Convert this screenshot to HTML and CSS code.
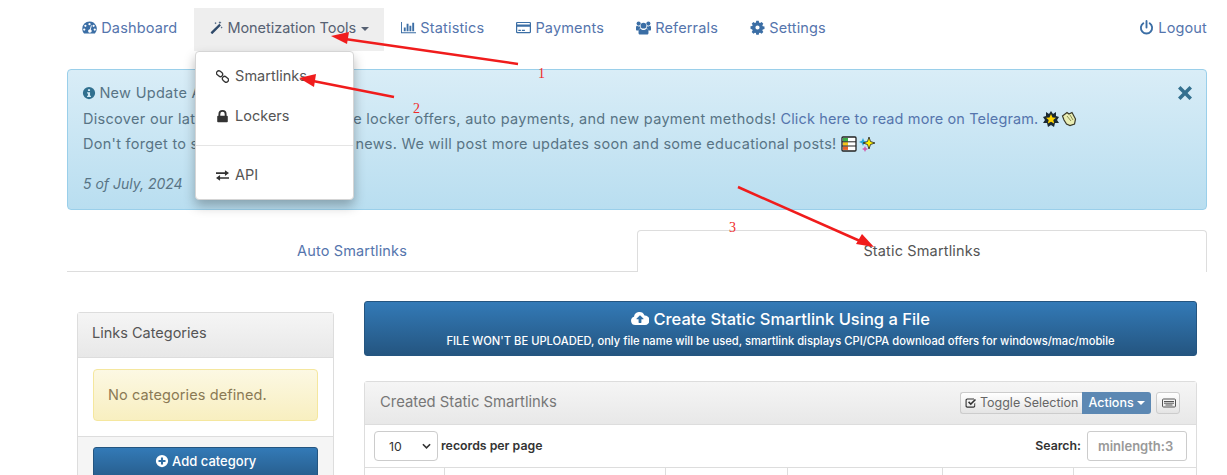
FILE: index.html
```html
<!DOCTYPE html>
<html lang="en">
<head>
  <meta charset="UTF-8" />
  <title>Static Smartlinks</title>
  <link rel="stylesheet" href="styles.css">
</head>
<body>
  <svg class="sprite" width="0" height="0">
    <symbol id="i-dash" viewBox="0 0 16 16"><path fill-rule="evenodd" d="M8 1.5A7.7 7.7 0 0 0 .3 9.2c0 2 .7 3.800 1.900 5.100h11.600a7.700 7.700 0 0 0-5.800-12.800ZM8 3.200a1.200 1.200 0 1 1 0 2.400 1.200 1.200 0 0 1 0-2.400ZM3.600 5a1.200 1.200 0 1 1 0 2.400 1.200 1.200 0 0 1 0-2.400Zm8.800 0a1.200 1.200 0 1 1 0 2.400 1.200 1.200 0 0 1 0-2.400ZM2.400 9a1.200 1.200 0 1 1 0 2.400 1.200 1.200 0 0 1 0-2.400Zm11.200 0a1.200 1.200 0 1 1 0 2.400 1.200 1.200 0 0 1 0-2.400ZM9.600 5.600l.9.3-1.200 4.200a1.900 1.900 0 1 1-.9-.2Z"/></symbol>
    <symbol id="i-magic" viewBox="0 0 16 16"><path d="M11.800 3.200 13.600 5 4.200 14.600a.7.7 0 0 1-1 0l-1-1a.7.7 0 0 1 0-1Z"/><path d="M12.500 0l.5 1.400 1.400.5-1.400.5-.5 1.400-.5-1.400-1.400-.5 1.400-.5ZM7.500 1l.4 1 1 .4-1 .4-.4 1-.4-1-1-.4 1-.4ZM14.500 6l.4 1 1 .4-1 .4-.4 1-.4-1-1-.4 1-.4Z"/></symbol>
    <symbol id="i-chart" viewBox="0 0 16 16"><path d="M0 2h1v11h15v1H0Z"/><path d="M3 8h2v4H3ZM6 4h2v8H6ZM9 6h2v6H9ZM12 3h2v9h-2Z"/></symbol>
    <symbol id="i-card" viewBox="0 0 16 16"><path fill-rule="evenodd" d="M1.300 2h13.400c.7 0 1.300.6 1.300 1.300v9.400c0 .7-.6 1.300-1.300 1.300H1.300C.6 14 0 13.400 0 12.700V3.300C0 2.600.6 2 1.300 2Zm0 1.200v1.600h13.400V3.200ZM1.300 7.200v5.600h13.400V7.200ZM2.500 10.500h2.700v1.100H2.500Zm3.800 0h3.200v1.100H6.300Z"/></symbol>
    <symbol id="i-users" viewBox="0 0 16 16"><circle cx="8" cy="6" r="3.100"/><circle cx="2.800" cy="3.800" r="2.200"/><circle cx="13.200" cy="3.800" r="2.200"/><path d="M3.600 15.500c-.6-.3-.9-.9-.9-1.600v-1.600c0-1.800 1-2.900 2.200-2.900.8.800 1.900 1.300 3.100 1.300s2.300-.5 3.100-1.300c1.200 0 2.200 1.100 2.200 2.900v1.600c0 .7-.3 1.300-.9 1.600ZM0 8C0 6.800.5 6.100 1.300 6.100c.5.500 1.100.7 1.700.7l.9-.1c.2.800.6 1.500 1.100 2-1.200.3-2 1.200-2.300 2.400H1C.4 11.100 0 10.600 0 10ZM16 8C16 6.800 15.500 6.100 14.700 6.100c-.5.500-1.100.7-1.700.7l-.9-.1c-.2.800-.6 1.500-1.100 2 1.200.3 2 1.200 2.300 2.400H15c.6 0 1-.5 1-1.100Z"/></symbol>
    <symbol id="i-gear" viewBox="-1 -1 18 18"><path fill-rule="evenodd" d="M6.500 0h3l.4 2.100 1.200.5 1.800-1.200 2.100 2.100-1.200 1.800.5 1.200 2.100.4v3l-2.100.4-.5 1.200 1.200 1.800-2.100 2.100-1.800-1.200-1.200.5-.4 2.100h-3l-.4-2.100-1.200-.5-1.800 1.200-2.100-2.100 1.200-1.800-.5-1.200L-.4 9.500v-3l2.100-.4.5-1.200L1 3.500l2.100-2.100 1.800 1.200 1.200-.5ZM8 5.500a2.500 2.500 0 1 0 0 5 2.500 2.500 0 0 0 0-5Z"/></symbol>
    <symbol id="i-power" viewBox="0 0 16 16"><path d="M8 1v7" fill="none" stroke="currentColor" stroke-width="2" stroke-linecap="round"/><path d="M4.600 3.500a6 6 0 1 0 6.800 0" fill="none" stroke="currentColor" stroke-width="2" stroke-linecap="round"/></symbol>
    <symbol id="i-info" viewBox="0 0 16 16"><path fill-rule="evenodd" d="M8 1a7 7 0 1 1 0 14A7 7 0 0 1 8 1Zm-1.200 2.600v2h2.400v-2ZM5.800 7v1.500h1v2.600h-1v1.400h4.400v-1.400h-1V7Z"/></symbol>
    <symbol id="i-chain" viewBox="0 0 16 16"><g fill="none" stroke="currentColor" stroke-width="1.600"><rect x="0.400" y="1.800" width="8" height="5.600" rx="2.800" transform="rotate(40 4.400 4.600)"/><rect x="7.600" y="8.600" width="8" height="5.600" rx="2.800" transform="rotate(40 11.600 11.400)"/></g></symbol>
    <symbol id="i-lock" viewBox="0 0 16 16"><path d="M3 7V5a5 5 0 0 1 10 0v2h.5c.6 0 1 .4 1 1v6c0 .6-.4 1-1 1h-11c-.6 0-1-.4-1-1V8c0-.6.4-1 1-1Zm2.300 0h5.400V5a2.700 2.700 0 0 0-5.400 0Z"/></symbol>
    <symbol id="i-exchange" viewBox="0 0 16 16"><path d="M0 4h11V1.500L16 5l-5 3.500V6H0ZM16 10H5V7.500L0 11l5 3.500V12h11Z"/></symbol>
    <symbol id="i-cloud" viewBox="0 0 18 16"><path fill-rule="evenodd" d="M4.200 14A4.200 4.200 0 0 1 3 5.800 5.500 5.500 0 0 1 13.500 4.400 4.800 4.800 0 0 1 14 14ZM9 4.200 5.400 7.800l.2.500h2v3.200c0 .3.200.5.500.5h1.800c.3 0 .5-.2.500-.5V8.300h2l.2-.5Z"/></symbol>
    <symbol id="i-plus" viewBox="0 0 16 16"><path fill-rule="evenodd" d="M8 1a7 7 0 1 1 0 14A7 7 0 0 1 8 1ZM6.800 4v2.800H4v2.400h2.800V12h2.400V9.200H12V6.800H9.200V4Z"/></symbol>
    <symbol id="i-check" viewBox="0 0 16 16"><path d="M3 2h9v1.300H3.200c-.6 0-1 .4-1 1v7.500c0 .6.400 1 1 1h8.100c.6 0 1-.4 1-1V9l1.300-1.300v4.300c0 1.300-1 2.300-2.300 2.300H3c-1.300 0-2.300-1-2.300-2.300V4.300C.7 3 1.700 2 3 2Z"/><path d="M4 7.300 5.500 5.800 7.700 8 13.200 2.500 14.700 4 7.700 11Z"/></symbol>
  </svg>

  <div class="page">
    <nav class="topnav">
      <a class="nav-item"><svg class="ico"><use href="#i-dash"/></svg> Dashboard</a>
      <a class="nav-item is-open"><svg class="ico"><use href="#i-magic"/></svg> Monetization Tools <span class="caret"></span></a>
      <a class="nav-item"><svg class="ico"><use href="#i-chart"/></svg> Statistics</a>
      <a class="nav-item"><svg class="ico"><use href="#i-card"/></svg> Payments</a>
      <a class="nav-item"><svg class="ico"><use href="#i-users"/></svg> Referrals</a>
      <a class="nav-item"><svg class="ico"><use href="#i-gear"/></svg> Settings</a>
      <a class="nav-item nav-right"><svg class="ico"><use href="#i-power"/></svg> Logout</a>
    </nav>

    <ul class="dropdown">
      <li><svg class="ico"><use href="#i-chain"/></svg> Smartlinks</li>
      <li><svg class="ico"><use href="#i-lock"/></svg> Lockers</li>
      <li class="divider"></li>
      <li><svg class="ico"><use href="#i-exchange"/></svg> API</li>
    </ul>

    <div class="notice">
      <svg class="notice-close" viewBox="0 0 16 16"><path d="M3.500 1 8 5.500 12.500 1 15 3.500 10.500 8l4.500 4.500-2.500 2.500L8 10.500 3.500 15 1 12.500 5.500 8 1 3.500Z"/></svg>
      <p><svg class="ico"><use href="#i-info"/></svg> New Update Available!</p>
      <p>Discover our latest features - exclusive locker offers, auto payments, and new payment methods! <a>Click here to read more on Telegram.</a>
        <svg class="emoji" viewBox="0 0 16 16"><path fill="#1b2a33" d="M8 0l2 3 3-2 0 4 3 1-2 3 2 3-4 0-1 4-3-2-3 2-1-4-4 0 2-3-2-3 3-1 0-4 3 2Z"/><path fill="#ffd400" d="M8 3l1.500 3.500 3.500.3-2.700 2.300.9 3.500L8 10.700l-3.200 1.900.9-3.500L3 6.800l3.500-.3Z"/></svg><svg class="emoji emoji-next" viewBox="0 0 16 16"><path fill="#e9edb4" stroke="#3a3a2a" stroke-width="1.200" d="M1.500 5 6 1.500l2 1.500 3-1.500 3.500 6.500-1 5-4.500 1.500-3.500-1.500L3 9Z"/><path fill="none" stroke="#8a8f55" d="M6 5l4 5M9 4l3 5"/></svg>
      </p>
      <p class="notice-tight">Don't forget to subscribe for all of the news. We will post more updates soon and some educational posts!
        <svg class="emoji" viewBox="0 0 16 16"><rect x="1" y="1" width="14" height="14" rx="1" fill="#fff" stroke="#222" stroke-width="1.300"/><rect x="2" y="2" width="5" height="3.500" fill="#3cae49"/><rect x="2" y="6.200" width="5" height="3.500" fill="#f5c518"/><rect x="2" y="10.400" width="5" height="3.500" fill="#e8622a"/><path stroke="#222" d="M1 5.800h14M1 10h14"/></svg><svg class="emoji emoji-next" viewBox="0 0 16 16"><path fill="#2aa7d8" d="M4 2l1.200 2.800L8 6 5.200 7.200 4 10 2.800 7.200 0 6l2.800-1.200Z"/><path fill="#d05fb0" d="M6 10l1 2 2 1-2 1-1 2-1-2-2-1 2-1Z"/><path fill="#fff000" stroke="#222" stroke-width=".8" d="M10 1l1.500 4.500L16 7l-4.500 1.500L10 13 8.500 8.500 4 7l4.500-1.500Z"/></svg>
      </p>
      <p class="notice-date">5 of July, 2024</p>
    </div>

    <div class="tabs">
      <a class="tab">Auto Smartlinks</a>
      <a class="tab tab-active">Static Smartlinks</a>
    </div>

    <div class="columns">
      <aside class="sidebar">
        <div class="panel">
          <div class="panel-head side-head">Links Categories</div>
          <div class="side-body"><div class="warn">No categories defined.</div></div>
          <div class="side-foot">
            <a class="btn-blue btn-add"><svg class="ico"><use href="#i-plus"/></svg> Add category</a>
          </div>
        </div>
      </aside>

      <main class="content">
        <a class="btn-blue btn-create">
          <span class="create-title"><svg class="ico-cloud"><use href="#i-cloud"/></svg> Create Static Smartlink Using a File</span>
          <span class="create-sub">FILE WON'T BE UPLOADED, only file name will be used, smartlink displays CPI/CPA download offers for windows/mac/mobile</span>
        </a>

        <div class="panel links-panel">
          <div class="panel-head links-head">
            <span>Created Static Smartlinks</span>
            <div class="toolbar">
              <div class="btn-group">
                <a class="btn-toggle"><svg class="ico"><use href="#i-check"/></svg> Toggle Selection</a>
                <a class="btn-actions">Actions <span class="caret"></span></a>
              </div>
              <a class="btn-keys">
                <svg viewBox="0 0 14 10" width="14" height="10"><rect x=".5" y="1" width="13" height="8" rx="1" fill="none" stroke="#555"/><path stroke="#555" d="M2 3.500h10M2 5.200h10M3.500 7h7"/></svg>
              </a>
            </div>
          </div>
          <div class="table-tools">
            <div class="per-page">
              <span class="fake-select">10 <svg viewBox="0 0 10 6" width="9" height="6"><path d="M1 1l4 4 4-4" fill="none" stroke="#333" stroke-width="1.800"/></svg></span>
              <b>records per page</b>
            </div>
            <div class="search">
              <b>Search:</b>
              <span class="fake-input">minlength:3</span>
            </div>
          </div>
          <div class="table-head">
            <span class="th th-1"></span><span class="th th-2"></span><span class="th th-3"></span><span class="th th-4"></span><span class="th th-5"></span><span class="th th-6"></span>
          </div>
        </div>
      </main>
    </div>

    <!-- annotations drawn over the screenshot -->
    <svg class="marks" viewBox="0 0 1227 475" width="1227" height="475">
      <g stroke="#f01c1c" stroke-width="2.500" fill="#f01c1c">
        <path d="M518 64 345 39"/><path stroke="none" d="M331 36 349 32 347 44Z"/>
        <path d="M394 97 313 81"/><path stroke="none" d="M299 78 316 74 314 87Z"/>
        <path d="M738 187 860 241"/><path stroke="none" d="M874 247 856 244 862 234Z"/>
      </g>
    </svg>
    <span class="mark-num mark-1">1</span>
    <span class="mark-num mark-2">2</span>
    <span class="mark-num mark-3">3</span>
  </div>
</body>
</html>
```

FILE: styles.css
```css
:root {
  --link: #5575ad;
  --nav-icon: #3b6ea5;
  --text: #555;
  --border: #ddd;
  --font: Inter, "Open Sans", sans-serif;
}

* {
  box-sizing: border-box;
}

html, body {
  margin: 0;
  height: 475px;
  overflow: hidden;
}

body {
  font-family: var(--font);
  font-size: 14.5px;
  color: var(--text);
  background: #fff;
}

.sprite {
  position: absolute;
}

.ico {
  width: 14px;
  height: 14px;
  fill: currentColor;
  vertical-align: -2px;
}

.page {
  position: relative;
  width: 1227px;
  height: 475px;
  padding: 8px 20px 0 67px;
  overflow: hidden;
}

/* top nav */
.topnav {
  display: flex;
  gap: 2px;
  height: 43px;
}

.nav-item {
  display: block;
  padding: 11px 15px;
  line-height: 17px;
  color: var(--link);
  white-space: nowrap;
  letter-spacing: 0.15px;
}

.nav-item .ico {
  width: 15px;
  height: 15px;
  color: var(--nav-icon);
}

.nav-item.is-open {
  background: #eee;
  color: #566173;
  letter-spacing: -0.05px;
}

.nav-item.is-open .ico {
  width: 14px;
  height: 14px;
  color: #2f4a6a;
}

.nav-item.is-open .caret {
  margin-left: 1px;
}

.nav-right {
  margin-left: auto;
  padding-right: 0;
}

.caret {
  display: inline-block;
  width: 0;
  height: 0;
  margin-left: 2px;
  vertical-align: 2px;
  border-top: 4px solid currentColor;
  border-left: 4px solid transparent;
  border-right: 4px solid transparent;
}

.dropdown {
  position: absolute;
  left: 195px;
  top: 51px;
  z-index: 5;
  width: 159px;
  height: 149px;
  margin: 0;
  padding: 5px 0 0;
  list-style: none;
  background: #fff;
  border: 1px solid #d5d5d5;
  border-radius: 4px;
  box-shadow: 0 6px 12px rgba(0,0,0,.28);
  color: #555;
}

.dropdown li {
  height: 40px;
  padding: 10px 20px 0;
  line-height: 17px;
  white-space: nowrap;
}

.dropdown .ico {
  width: 13px;
  height: 13px;
  margin-right: 2px;
  color: #333;
}

.dropdown .divider {
  height: 19px;
  padding: 8px 0 0;
}

.dropdown .divider::after {
  content: "";
  display: block;
  height: 1px;
  background: #e5e5e5;
}

/* update notice */
.notice {
  position: relative;
  height: 141px;
  margin-top: 18px;
  padding: 10px 15px;
  background: linear-gradient(to bottom, #d9edf7, #b9def0);
  border: 1px solid #9acfea;
  border-radius: 4px;
  color: #587485;
  letter-spacing: 0.3px;
}

.notice p {
  height: 25.5px;
  margin: 0;
  line-height: 25.5px;
  white-space: nowrap;
}

.notice a {
  color: var(--link);
  letter-spacing: 0.12px;
}

.notice .ico {
  margin: 0 -1px 0 -1px;
  color: #31708f;
}

.notice .notice-tight {
  letter-spacing: 0.27px;
}

.notice .notice-date {
  margin-top: 14px;
  font-size: 14px;
  font-style: italic;
  letter-spacing: 0;
}

.notice-close {
  position: absolute;
  right: 13px;
  top: 15px;
  width: 16px;
  height: 16px;
  fill: #34708f;
}

.emoji {
  width: 16px;
  height: 16px;
  vertical-align: -3px;
}

.emoji-next {
  margin-left: 2px;
}

/* tabs */
.tabs {
  display: flex;
  height: 42px;
  margin-top: 20px;
}

.tab {
  flex: none;
  width: 50%;
  padding-top: 12px;
  line-height: 17px;
  text-align: center;
  letter-spacing: 0.15px;
  color: var(--link);
  border-bottom: 1px solid var(--border);
}

.tab-active {
  padding-top: 11px;
  color: #555;
  border: 1px solid var(--border);
  border-bottom: 0;
  border-radius: 4px 4px 0 0;
}

/* columns */
.columns {
  display: flex;
  gap: 30px;
  padding-left: 10px;
}

.sidebar {
  width: 257px;
  padding-top: 40px;
  flex-shrink: 0;
}

.content {
  width: 833px;
  padding-top: 29px;
}

.panel {
  background: #fff;
  border: 1px solid var(--border);
  border-radius: 3px;
}

.panel-head {
  background: linear-gradient(to bottom, #f5f5f5, #e8e8e8);
  border-bottom: 1px solid var(--border);
}

.side-head {
  height: 45px;
  padding: 11px 14px;
  line-height: 18px;
  color: #555;
}

.side-body {
  padding: 11px 15px 15px;
  border-bottom: 1px solid var(--border);
}

.warn {
  height: 52px;
  padding: 0 14px;
  line-height: 50px;
  color: #8a7a55;
  letter-spacing: 0.1px;
  background: linear-gradient(to bottom, #fcf8e3, #f8efc0);
  border: 1px solid #f5e79e;
  border-radius: 4px;
}

.side-foot {
  height: 60px;
  padding: 10px 15px;
  background: #f5f5f5;
}

.btn-blue {
  display: block;
  color: #fff;
  text-align: center;
  background: linear-gradient(to bottom, #337ab7, #245580);
  border: 1px solid #245580;
  border-radius: 3px;
}

.btn-add {
  height: 40px;
  padding-top: 5px;
  font-size: 13px;
  font-weight: 500;
  line-height: 17px;
}

.btn-create {
  height: 55px;
  padding-top: 6px;
}

.create-title {
  display: block;
  font-size: 16.500px;
  font-weight: 500;
  line-height: 22px;
}

.ico-cloud {
  width: 18px;
  height: 16px;
  fill: currentColor;
  vertical-align: -2px;
}

.create-sub {
  display: block;
  margin-top: 4px;
  font-size: 11.200px;
  font-weight: 500;
  line-height: 15px;
}

/* created links panel */
.links-panel {
  margin-top: 25px;
}

.links-head {
  display: flex;
  align-items: center;
  justify-content: space-between;
  height: 43px;
  padding: 0 15px 2px;
  font-size: 14.800px;
  color: #777;
}

.toolbar {
  display: flex;
  gap: 5px;
  padding-right: 1px;
  padding-top: 2px;
}

.btn-group {
  display: flex;
}

.btn-toggle, .btn-actions, .btn-keys {
  display: block;
  height: 22px;
  padding: 0 5px;
  font-size: 12.500px;
  line-height: 19px;
  white-space: nowrap;
}

.btn-toggle {
  padding: 0 4px;
  color: #666;
  background: linear-gradient(to bottom, #fff, #e4e4e4);
  border: 1px solid #ccc;
  border-right: 0;
  border-radius: 3px 0 0 3px;
}

.btn-toggle .ico {
  width: 12px;
  height: 12px;
  margin-right: -1px;
  color: #333;
}

.btn-actions {
  padding: 0 6px;
  font-weight: 500;
  line-height: 21px;
  color: #fff;
  background: #5c88b3;
  border-radius: 0 3px 3px 0;
}

.btn-actions .caret {
  margin-left: 0;
}

.btn-keys {
  width: 24px;
  padding-top: 1px;
  text-align: center;
  background: linear-gradient(to bottom, #fff, #e4e4e4);
  border: 1px solid #ccc;
  border-radius: 3px;
}

.table-tools {
  display: flex;
  justify-content: space-between;
  align-items: center;
  height: 43px;
  padding: 0 9px;
  border-bottom: 1px solid var(--border);
  font-size: 12.300px;
  color: #333;
}

.per-page, .search {
  display: flex;
  align-items: center;
  gap: 3px;
}

.per-page b, .search b {
  position: relative;
  top: -1px;
  font-weight: 600;
}

.search {
  gap: 6px;
}

.fake-select {
  display: flex;
  align-items: center;
  justify-content: space-between;
  width: 64px;
  height: 30px;
  padding: 0 6px 0 14px;
  background: #fff;
  border: 1px solid #ccc;
  border-radius: 4px;
}

.fake-input {
  width: 100px;
  height: 30px;
  padding: 0 10px;
  font-size: 13px;
  font-weight: 600;
  line-height: 28px;
  white-space: nowrap;
  color: #999;
  background: #fff;
  border: 1px solid #ccc;
  border-radius: 3px;
}

.table-head {
  display: flex;
  height: 20px;
}

.th {
  border-right: 1px solid var(--border);
}

.th-1 { width: 80px; }
.th-2 { width: 221px; }
.th-3 { width: 122px; }
.th-4 { width: 155px; }
.th-5 { width: 131px; }
.th-6 { border-right: 0; }

/* annotations */
.marks {
  position: absolute;
  left: 0;
  top: 0;
  z-index: 10;
  pointer-events: none;
}

.mark-num {
  position: absolute;
  z-index: 10;
  font-family: "Liberation Serif", serif;
  font-size: 14px;
  line-height: 16px;
  color: #f02a2a;
}

.mark-1 { left: 538px; top: 66px; }
.mark-2 { left: 413px; top: 101px; }
.mark-3 { left: 729px; top: 220px; }
```
